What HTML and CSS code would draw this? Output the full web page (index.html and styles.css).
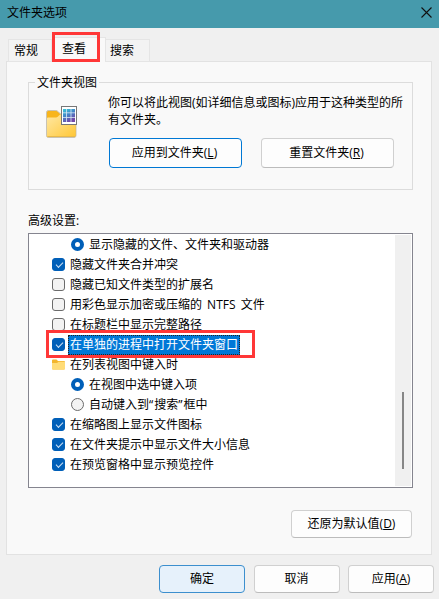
FILE: index.html
```html
<!DOCTYPE html>
<html lang="zh-CN">
<head>
  <meta charset="UTF-8">
  <meta name="viewport" content="width=device-width, initial-scale=1.0">
  <title>文件夹选项</title>
  <link rel="stylesheet" href="styles.css">
</head>
<body>
  <div class="titlebar">
    <span>文件夹选项</span>
    <svg class="close" width="11" height="11" viewBox="0 0 11 11"><path d="M.5 .5l10 10M10.5 .5l-10 10" fill="none" stroke="#111" stroke-width="1.1"/></svg>
  </div>

  <div class="tabs">
    <div class="tab tab--first">常规</div>
    <div class="tab tab--active">查看<div class="mark mark--tab"></div></div>
    <div class="tab">搜索</div>
  </div>

  <div class="panel">
    <div class="group">
      <div class="group__title">文件夹视图</div>
      <svg class="group__icon" width="32" height="33" viewBox="0 0 32 33">
        <defs>
          <linearGradient id="folder" x1="0" y1="0" x2="1" y2="1">
            <stop offset="0" stop-color="#ffe8a4"/>
            <stop offset="1" stop-color="#ffc736"/>
          </linearGradient>
          <linearGradient id="tiles" x1="0" y1="0" x2=".5" y2="1">
            <stop offset="0" stop-color="#38cbd8"/>
            <stop offset=".5" stop-color="#4386c8"/>
            <stop offset="1" stop-color="#7548a8"/>
          </linearGradient>
        </defs>
        <path d="M.5 6.5q0-2 2-2h7q1.500 0 2.500 1l2.500 2.500h14q1.500 0 1.500 1.500v20q0 2-2 2H2.500q-2 0-2-2z" fill="#f8b51c" stroke="#c9c3b3"/>
        <path d="M1 12.500q0-1 1-1h8q1 0 2-1l2-2h15.500v21q0 1.500-1.500 1.500H2.500q-1.500 0-1.500-1.500z" fill="url(#folder)"/>
        <path d="M1.500 30.500h27.500" stroke="#e8b94a"/>
        <rect x="15.500" y=".5" width="15" height="18" fill="#fff" stroke="#777"/>
        <path d="M17 3h12v13H17z" fill="url(#tiles)"/>
        <path d="M20.500 3v13M25 3v13M17 6.800h12M17 11.500h12" stroke="#d9eaf5" stroke-width=".8"/>
      </svg>
      <div class="group__main">
        <p>你可以将此视图(如详细信息或图标)应用于这种类型的所有文件夹。</p>
        <div class="group__buttons">
          <button class="btn btn--focus">应用到文件夹(<u>L</u>)</button>
          <button class="btn">重置文件夹(<u>R</u>)</button>
        </div>
      </div>
    </div>

    <div class="label">高级设置:</div>
    <div class="list">
      <ul class="list__items">
        <li class="sub"><i class="radio radio--on"></i><span>显示隐藏的文件、文件夹和驱动器</span></li>
        <li><i class="check check--on"></i><span>隐藏文件夹合并冲突</span></li>
        <li><i class="check"></i><span>隐藏已知文件类型的扩展名</span></li>
        <li><i class="check"></i><span class="ntfs">用彩色显示加密或压缩的 NTFS 文件</span></li>
        <li><i class="check"></i><span>在标题栏中显示完整路径</span></li>
        <li class="selected"><i class="check check--on"></i><span>在单独的进程中打开文件夹窗口</span><div class="mark mark--row"></div></li>
        <li>
          <svg class="folder" width="13" height="11" viewBox="0 0 13 11">
            <path d="M0 1.500Q0 .5 1 .5h3.500l1.500 1.500h6q1 0 1 1V9.500q0 1-1 1H1q-1 0-1-1z" fill="#f3b52d"/>
            <path d="M0 4h5l1.500-1.200H13V9.500q0 1-1 1H1q-1 0-1-1z" fill="#ffdc78"/>
          </svg>
          <span>在列表视图中键入时</span>
        </li>
        <li class="sub"><i class="radio radio--on"></i><span>在视图中选中键入项</span></li>
        <li class="sub"><i class="radio"></i><span>自动键入到<b class="quote">“</b>搜索<b class="quote">”</b>框中</span></li>
        <li><i class="check check--on"></i><span>在缩略图上显示文件图标</span></li>
        <li><i class="check check--on"></i><span>在文件夹提示中显示文件大小信息</span></li>
        <li><i class="check check--on"></i><span>在预览窗格中显示预览控件</span></li>
      </ul>
      <div class="scrollbar"><div class="scrollbar__thumb"></div></div>
    </div>

    <button class="btn btn--restore">还原为默认值(<u>D</u>)</button>
  </div>

  <div class="footer">
    <button class="btn btn--default">确定</button>
    <button class="btn">取消</button>
    <button class="btn">应用(<u>A</u>)</button>
  </div>
</body>
</html>
```
FILE: styles.css
```css
* {
  box-sizing: border-box;
  margin: 0;
  padding: 0;
}

body {
  width: 439px;
  height: 599px;
  overflow: hidden;
  background: #f0f0f0;
  color: #000;
  font-family: "Open Sans", "Noto Sans CJK SC", sans-serif;
  font-size: 12px;
  line-height: 16px;
}

.titlebar {
  display: flex;
  justify-content: space-between;
  height: 28px;
  padding: 5px 7px 0;
  background: #469aac;
}

.close {
  margin-top: 2px;
}

/* tabs */
.tabs {
  display: flex;
  align-items: flex-end;
  height: 34px;
  padding-left: 8px;
}

.tab {
  width: 44px;
  height: 23px;
  padding: 3px 0 0 4px;
  border: 1px solid #e5e5e5;
  border-left: 0;
  background: #f3f3f3;
}

.tab--first {
  padding-left: 5px;
  border-left: 1px solid #e5e5e5;
}

.tab--active {
  position: relative;
  z-index: 1;
  width: 54px;
  height: 25px;
  padding: 3px 0 0 10px;
  border-bottom: 0;
  background: #f9f9f9;
}

/* red highlight frames */
.mark {
  position: absolute;
  border: 3px solid #ff3737;
}

.mark--tab {
  top: -6px;
  left: 0;
  width: 48px;
  height: 30px;
}

.mark--row {
  top: -5px;
  left: 16px;
  width: 209px;
  height: 28px;
}

.panel {
  width: 426px;
  height: 494px;
  margin: -1px 0 0 6px;
  padding: 20px 18px 0 21px;
  border: 1px solid #e2e2e2;
  background: #f9f9f9;
}

.group {
  position: relative;
  display: flex;
  height: 108px;
  border: 1px solid #dcdcdc;
}

.group__title {
  position: absolute;
  top: -8px;
  left: 6px;
  padding: 0 2px;
  background: #f9f9f9;
}

.group__icon {
  margin: 23px 0 0 17px;
}

.group__main {
  padding: 11px 0 0 30px;
}

.group__main p {
  width: 300px;
  line-height: 17px;
}

.group__buttons {
  display: flex;
  gap: 19px;
  margin: 10px 0 0 1px;
}

/* buttons */
.btn {
  width: 86px;
  height: 28px;
  padding-bottom: 1px;
  border: 1px solid #d0d0d0;
  border-bottom-color: #bcbcbc;
  border-radius: 4px;
  background: #fdfdfd;
  color: #000;
  font: inherit;
}

.btn u {
  text-underline-offset: 1px;
}

.group .btn {
  width: 133px;
  height: 30px;
  padding-right: 2px;
}

.group .btn--focus {
  border-color: #0078d4;
}

.btn--default {
  border-color: #3c8fce;
  background: #e6f1fb;
}

.btn--restore {
  display: block;
  width: 121px;
  margin: 22px 1px 0 auto;
}

.label {
  margin: 23px 0 4px;
}

/* advanced settings */
.list {
  display: flex;
  justify-content: space-between;
  height: 255px;
  padding: 1px;
  border: 1px solid #85858f;
  background: #fff;
}

.list__items {
  list-style: none;
}

.list__items li {
  position: relative;
  display: flex;
  align-items: flex-start;
  height: 20px;
  padding-left: 22px;
}

.list__items li.sub {
  padding-left: 41px;
}

.list__items span {
  height: 20px;
  margin-left: 3px;
  padding: 0 2px;
  line-height: 19px;
  white-space: nowrap;
}

.ntfs {
  word-spacing: 2px;
}

.quote {
  font-weight: normal;
  letter-spacing: 1px;
}

.selected span {
  border: 1px dotted #f08a28;
  outline: 1px dotted #222;
  outline-offset: -1px;
  padding: 0 1px;
  background: #0078d7;
  color: #fff;
  line-height: 17px;
}

.check {
  width: 13px;
  height: 13px;
  margin-top: 3px;
  border: 1px solid #6b6b6b;
  border-radius: 3px;
  background: #f3f3f3;
}

.check--on {
  border-color: #005fb8;
  background: #005fb8;
}

.check--on::after {
  content: "";
  display: block;
  width: 6px;
  height: 3px;
  margin: 3px 0 0 2.5px;
  border: solid #cfe2f3;
  border-width: 0 0 1px 1px;
  transform: rotate(-45deg);
}

.radio {
  width: 13px;
  height: 13px;
  margin-top: 3px;
  border: 1px solid #6b6b6b;
  border-radius: 50%;
  background: #f3f3f3;
}

.radio--on {
  border: 4px solid #005fb8;
  background: #fff;
}

.folder {
  margin-top: 4px;
}

.scrollbar {
  width: 16px;
  background: #f0f0f0;
}

.scrollbar__thumb {
  width: 2px;
  height: 77px;
  margin: 157px 0 0 7px;
  background: #868686;
}

.footer {
  display: flex;
  justify-content: flex-end;
  gap: 8.5px;
  padding: 10px 5px 0 0;
}
```
